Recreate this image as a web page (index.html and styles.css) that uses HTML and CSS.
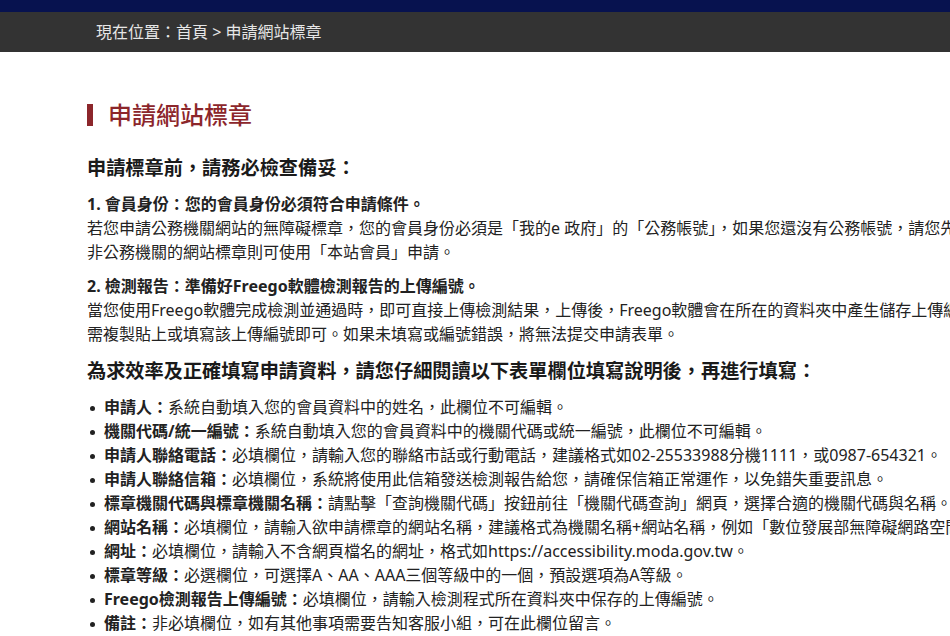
FILE: index.html
```html
<!DOCTYPE html>
<html lang="zh-Hant">
<head>
<meta charset="utf-8">
<title>申請網站標章</title>
<link rel="stylesheet" href="styles.css">
</head>
<body>
<div class="page">
  <div class="topbar"></div>
  <nav class="breadcrumb">現在位置：首頁 &gt; 申請網站標章</nav>
  <main class="content">
    <h2 class="title">申請網站標章</h2>
    <h3 class="subtitle">申請標章前，請務必檢查備妥：</h3>
    <p class="item"><strong>1. 會員身份：您的會員身份必須符合申請條件。</strong><br>若您申請公務機關網站的無障礙標章，您的會員身份必須是「我的e 政府」的「公務帳號」，如果您還沒有公務帳號，請您先至「我的e政府」網站申請。<br>非公務機關的網站標章則可使用「本站會員」申請。</p>
    <p class="item"><strong>2. 檢測報告：準備好Freego軟體檢測報告的上傳編號。</strong><br>當您使用Freego軟體完成檢測並通過時，即可直接上傳檢測結果，上傳後，Freego軟體會在所在的資料夾中產生儲存上傳編號的檔案，申請時只<br>需複製貼上或填寫該上傳編號即可。如果未填寫或編號錯誤，將無法提交申請表單。</p>
    <h3 class="subtitle">為求效率及正確填寫申請資料，請您仔細閱讀以下表單欄位填寫說明後，再進行填寫：</h3>
    <ul class="fields">
      <li><strong>申請人：</strong>系統自動填入您的會員資料中的姓名，此欄位不可編輯。</li>
      <li><strong>機關代碼/統一編號：</strong>系統自動填入您的會員資料中的機關代碼或統一編號，此欄位不可編輯。</li>
      <li><strong>申請人聯絡電話：</strong>必填欄位，請輸入您的聯絡市話或行動電話，建議格式如02-25533988分機1111，或0987-654321。</li>
      <li><strong>申請人聯絡信箱：</strong>必填欄位，系統將使用此信箱發送檢測報告給您，請確保信箱正常運作，以免錯失重要訊息。</li>
      <li><strong>標章機關代碼與標章機關名稱：</strong>請點擊「查詢機關代碼」按鈕前往「機關代碼查詢」網頁，選擇合適的機關代碼與名稱。</li>
      <li><strong>網站名稱：</strong>必填欄位，請輸入欲申請標章的網站名稱，建議格式為機關名稱+網站名稱，例如「數位發展部無障礙網路空間服務網」。</li>
      <li><strong>網址：</strong>必填欄位，請輸入不含網頁檔名的網址，格式如https://accessibility.moda.gov.tw。</li>
      <li><strong>標章等級：</strong>必選欄位，可選擇A、AA、AAA三個等級中的一個，預設選項為A等級。</li>
      <li><strong>Freego檢測報告上傳編號：</strong>必填欄位，請輸入檢測程式所在資料夾中保存的上傳編號。</li>
      <li><strong>備註：</strong>非必填欄位，如有其他事項需要告知客服小組，可在此欄位留言。</li>
    </ul>
  </main>
</div>
</body>
</html>
```

FILE: styles.css
```css
html, body {
  margin: 0;
  padding: 0;
  background: #ffffff;
  overflow: hidden;
}

.page {
  width: 100%;
  overflow: hidden;
  font-family: "Noto Sans", "Noto Sans CJK TC", sans-serif;
  color: #222222;
}

.topbar {
  height: 12px;
  background: #07124f;
}

.breadcrumb {
  height: 40px;
  line-height: 40px;
  background: #333333;
  color: #e6e6e6;
  font-size: 16px;
  padding-left: 96px;
  white-space: nowrap;
}

.content {
  margin-left: 87px;
  width: 1200px;
  white-space: nowrap;
}

.title {
  margin: 52px 0 0;
  border-left: 6px solid #8c262b;
  padding-left: 15px;
  line-height: 22px;
  font-size: 24px;
  font-weight: 500;
  color: #8c262b;
}

.subtitle {
  margin: 27px 0 0;
  font-size: 19.2px;
  line-height: 29px;
  font-weight: 700;
  color: #1a1a1a;
}

.item {
  margin: 10px 0 0;
  font-size: 16px;
  line-height: 24px;
}

.item + .subtitle {
  margin-top: 10px;
}

.item strong,
.fields strong {
  font-weight: 700;
}

.fields {
  list-style: none;
  margin: 10px 0 0;
  padding: 0;
  font-size: 16px;
  line-height: 24px;
}

.fields li {
  padding-left: 17px;
}

.fields li::before {
  content: "";
  display: inline-block;
  width: 5px;
  height: 5px;
  border-radius: 50%;
  background: #222222;
  margin-left: -14px;
  margin-right: 9px;
  vertical-align: middle;
}
```
